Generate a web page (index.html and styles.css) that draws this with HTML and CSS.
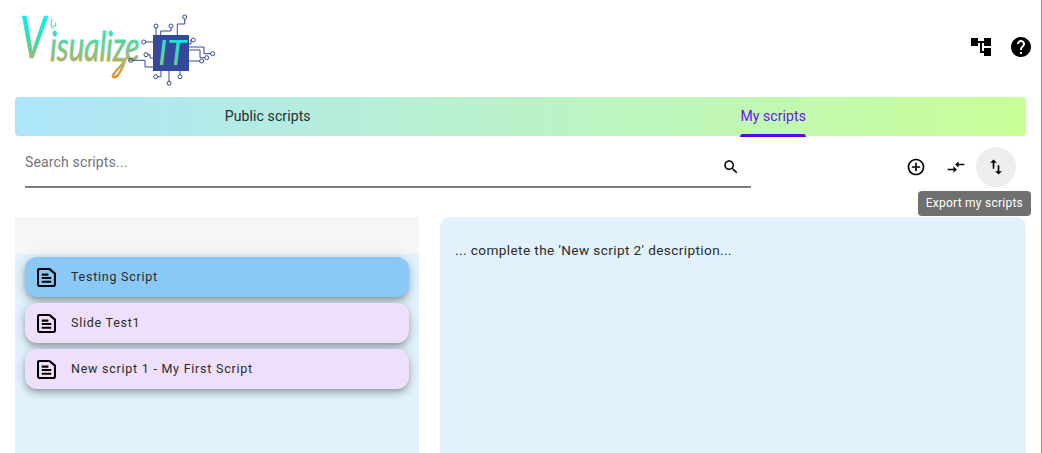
FILE: index.html
```html
<!DOCTYPE html>
<html lang="en">
<head>
<meta charset="utf-8">
<title>VisualizeIT</title>
<link rel="stylesheet" href="styles.css">
</head>
<body>
<div class="page">
  <header class="topbar">
    <svg class="logo" width="200" height="80" viewBox="15 10 200 80" xmlns="http://www.w3.org/2000/svg" role="img" aria-label="VisualizeIT">
      <defs>
        <linearGradient id="word" gradientUnits="userSpaceOnUse" x1="0" y1="14" x2="0" y2="78">
          <stop offset="0" stop-color="#00f5ee"/>
          <stop offset=".35" stop-color="#2fe0b8"/>
          <stop offset=".62" stop-color="#9cc07c"/>
          <stop offset=".8" stop-color="#b8ad5e"/>
          <stop offset="1" stop-color="#f58a1f"/>
        </linearGradient>
        <linearGradient id="wordV" gradientUnits="userSpaceOnUse" x1="0" y1="-42" x2="0" y2="2">
          <stop offset="0" stop-color="#00f5ee"/>
          <stop offset=".55" stop-color="#3fd8a8"/>
          <stop offset="1" stop-color="#a8b86c"/>
        </linearGradient>
        <linearGradient id="wordRest" gradientUnits="userSpaceOnUse" x1="0" y1="-32" x2="0" y2="2">
          <stop offset="0" stop-color="#20e8c8"/>
          <stop offset=".6" stop-color="#78c88c"/>
          <stop offset="1" stop-color="#b4ae62"/>
        </linearGradient>
        <linearGradient id="chipText" gradientUnits="userSpaceOnUse" x1="180" y1="38" x2="162" y2="68">
          <stop offset="0" stop-color="#00f0e0"/>
          <stop offset="1" stop-color="#8cc47c"/>
        </linearGradient>
      </defs>
      <text class="logo-v" transform="translate(20 58) scale(.72 1)" fill="url(#wordV)" stroke="url(#wordV)" stroke-width=".5">V</text>
      <text class="logo-word" transform="translate(50 61) scale(.74 1)" fill="url(#wordRest)" stroke="url(#wordRest)" stroke-width=".8">isualize</text>
      <path d="M126 58c-3 7-10 12-13 17-1 3 3 3 5 0 3-4 6-10 8-17" fill="none" stroke="url(#word)" stroke-width="2.4" stroke-linecap="round"/>
      <path d="M53 29c-3-3-2-7-1-10M53 26c2 1 4-1 2-3" fill="none" stroke="#40dcb0" stroke-width="1.2"/>
      <g fill="none" stroke="#34489c" stroke-width="1">
        <path d="M156 28v7M171 28v3h-10.300v4M184.700 19v5h-7.400v11M145.700 42h7.300M148 54.700h2V58h3M132.700 60.300H145V67h8"/>
        <path d="M189 44h2v-4M189 47h15v6.700h7M189 50h11v7.700h5M189 61h11M158 76.700h3V71M169 71v10M180 71v4"/>
        <circle cx="156" cy="26" r="2"/><circle cx="171" cy="26" r="2"/><circle cx="184.700" cy="17" r="2"/>
        <circle cx="143.700" cy="42" r="2"/><circle cx="146" cy="54.700" r="2"/><circle cx="130.700" cy="60.300" r="2"/>
        <circle cx="193.300" cy="40" r="2"/><circle cx="212.700" cy="53.700" r="2"/><circle cx="206.700" cy="57.700" r="2"/>
        <circle cx="201.700" cy="61" r="2"/><circle cx="155.700" cy="76.700" r="2"/><circle cx="169" cy="83.300" r="2"/>
        <circle cx="180" cy="76.700" r="2"/>
      </g>
      <rect x="153" y="35" width="36" height="36" fill="#34489c"/>
      <text class="logo-it" x="158" y="65" fill="url(#chipText)">IT</text>
    </svg>
    <div class="top-actions">
      <svg class="icon24" viewBox="0 0 24 24"><path d="M22 11V3h-7v3H9V3H2v8h7V8h2v10h4v3h7v-8h-7v3h-2V8h2v3z"/></svg>
      <svg class="icon24" viewBox="0 0 24 24"><path d="M12 2C6.480 2 2 6.480 2 12s4.480 10 10 10 10-4.480 10-10S17.520 2 12 2zm1 17h-2v-2h2v2zm2.070-7.750l-.9.920C13.450 12.900 13 13.500 13 15h-2v-.5c0-1.100.45-2.100 1.170-2.830l1.240-1.260c.37-.36.59-.86.59-1.410 0-1.100-.9-2-2-2s-2 .9-2 2H8c0-2.210 1.790-4 4-4s4 1.790 4 4c0 .88-.36 1.680-.93 2.250z"/></svg>
    </div>
  </header>

  <nav class="tabs">
    <div class="tab">Public scripts</div>
    <div class="tab tab-active"><span class="tab-label">My scripts</span></div>
  </nav>

  <section class="toolbar">
    <div class="search">
      <span class="search-text">Search scripts...</span>
      <svg class="icon18" viewBox="0 0 24 24"><path d="M15.500 14h-.79l-.28-.27C15.410 12.590 16 11.110 16 9.500 16 5.910 13.090 3 9.500 3S3 5.910 3 9.500 5.910 16 9.500 16c1.610 0 3.090-.59 4.230-1.570l.27.28v.79l5 4.990L20.490 19l-4.990-5zm-6 0C7.010 14 5 11.990 5 9.500S7.010 5 9.500 5 14 7.010 14 9.500 11.990 14 9.500 14z"/></svg>
    </div>
    <div class="tools">
      <span class="tool"><svg class="icon20" viewBox="0 0 24 24"><path d="M13 7h-2v4H7v2h4v4h2v-4h4v-2h-4V7zm-1-5C6.480 2 2 6.480 2 12s4.480 10 10 10 10-4.480 10-10S17.520 2 12 2zm0 18c-4.410 0-8-3.590-8-8s3.590-8 8-8 8 3.590 8 8-3.590 8-8 8z"/></svg></span>
      <span class="tool"><svg class="icon20" viewBox="0 0 24 24"><path d="M9.010 14H2v2h7.010v3L13 15l-3.990-4v3zm5.980-1v-3H22V8h-7.010V5L11 9l3.990 4z"/></svg></span>
      <span class="tool tool-hover"><svg class="icon20" viewBox="0 0 24 24"><path d="M9 3 5 6.990h3V14h2V6.990h3L9 3zm7 14.010V10h-2v7.010h-3L15 21l4-3.990h-3z"/></svg>
        <span class="tooltip">Export my scripts</span>
      </span>
    </div>
  </section>

  <main class="panels">
    <aside class="list-panel">
      <div class="list-head"></div>
      <div class="list-body">
        <div class="card card-selected"><svg class="doc" viewBox="0 0 20 20"><path d="M3 1h10l6 5v11a2 2 0 0 1-2 2H3a2 2 0 0 1-2-2V3a2 2 0 0 1 2-2z"/><path d="M5 7h7M5 10.500h10M5 14.500h10"/></svg><span class="card-title">Testing Script</span></div>
        <div class="card"><svg class="doc" viewBox="0 0 20 20"><path d="M3 1h10l6 5v11a2 2 0 0 1-2 2H3a2 2 0 0 1-2-2V3a2 2 0 0 1 2-2z"/><path d="M5 7h7M5 10.500h10M5 14.500h10"/></svg><span class="card-title">Slide Test1</span></div>
        <div class="card"><svg class="doc" viewBox="0 0 20 20"><path d="M3 1h10l6 5v11a2 2 0 0 1-2 2H3a2 2 0 0 1-2-2V3a2 2 0 0 1 2-2z"/><path d="M5 7h7M5 10.500h10M5 14.500h10"/></svg><span class="card-title">New script 1 - My First Script</span></div>
      </div>
    </aside>
    <article class="detail">... complete the 'New script 2' description...</article>
  </main>
</div>
</body>
</html>
```
FILE: styles.css
```css
html, body {
  margin: 0;
  height: 100%;
  overflow: hidden;
  background: #fff;
}

.page {
  box-sizing: border-box;
  width: 1042px;
  height: 453px;
  padding: 0 15px;
  border-right: 1px solid #8f8f8f;
  font-family: Roboto, "Liberation Sans", sans-serif;
  color: #212121;
  overflow: hidden;
}

.topbar {
  height: 97px;
  display: flex;
  align-items: flex-start;
  justify-content: space-between;
}

.logo {
  display: block;
  margin-top: 10px;
  overflow: visible;
}

.logo-v {
  font-family: Lato, sans-serif;
  font-style: italic;
  font-size: 58px;
}

.logo-word {
  font-family: Lato, sans-serif;
  font-style: italic;
  font-size: 40px;
}

.logo-it {
  font-family: Lato, sans-serif;
  font-style: italic;
  font-weight: 400;
  font-size: 35px;
}

.top-actions {
  display: flex;
  gap: 16px;
  margin-top: 35px;
  margin-right: -7px;
}

.icon24 {
  display: block;
  width: 24px;
  height: 24px;
  fill: #000;
}

.icon20 {
  display: block;
  width: 20px;
  height: 20px;
  fill: #000;
}

.icon18 {
  display: block;
  width: 18px;
  height: 18px;
  fill: #000;
  flex: none;
}

.tabs {
  display: flex;
  height: 39px;
  border-radius: 4px;
  background: linear-gradient(90deg, #ade5fb, #c8ff98);
}

.tab {
  flex: 1;
  display: flex;
  align-items: center;
  justify-content: center;
  padding-bottom: 2px;
  box-sizing: border-box;
  font-size: 14px;
  letter-spacing: .1px;
  color: #2a2a2a;
}

.tab-active {
  color: #6a14ee;
}

.tab-label {
  position: relative;
}

.tab-label::after {
  content: "";
  position: absolute;
  left: 0;
  right: 0;
  top: 26px;
  height: 3px;
  border-radius: 3px 3px 0 0;
  background: #6200ee;
}

.toolbar {
  display: flex;
  justify-content: space-between;
  align-items: flex-start;
  height: 81px;
  padding: 11px 10px 0;
  box-sizing: border-box;
}

.search {
  box-sizing: border-box;
  width: 726px;
  height: 41px;
  display: flex;
  align-items: center;
  justify-content: space-between;
  padding: 0 11px 0 0;
  border-bottom: 2px solid #7d7d7d;
}

.search-text {
  font-size: 14px;
  color: #757575;
  letter-spacing: .15px;
  margin-bottom: 9px;
}

.tools {
  display: flex;
}

.tool {
  position: relative;
  width: 40px;
  height: 40px;
  display: flex;
  align-items: center;
  justify-content: center;
  border-radius: 50%;
}

.tool-hover {
  background: #eeeeee;
}

.tooltip {
  position: absolute;
  top: 44px;
  right: -15px;
  box-sizing: border-box;
  height: 25px;
  line-height: 25px;
  padding: 0 8px;
  border-radius: 4px;
  background: #707070;
  color: #fff;
  font-size: 12px;
  letter-spacing: .24px;
  white-space: nowrap;
}

.panels {
  display: flex;
  gap: 21px;
  height: 300px;
}

.list-panel {
  width: 404px;
  flex: none;
  display: flex;
  flex-direction: column;
}

.list-head {
  height: 37px;
  flex: none;
  background: #f6f6f6;
}

.list-body {
  flex: 1;
  display: flex;
  flex-direction: column;
  gap: 6px;
  padding: 3px 10px;
  background: #e1f2fd;
}

.card {
  height: 40px;
  flex: none;
  display: flex;
  align-items: center;
  gap: 15px;
  padding-left: 12px;
  border-radius: 12px;
  background: #eee0fa;
  box-shadow: 0 3px 5px -1px rgba(0, 0, 0, .2), 0 5px 8px 0 rgba(0, 0, 0, .14), 0 1px 14px 0 rgba(0, 0, 0, .12);
}

.card-title {
  margin-bottom: 2px;
  font-size: 12.5px;
  letter-spacing: .75px;
  color: #2a2a2a;
}

.card-selected {
  background: #8ac9f7;
}

.doc {
  width: 19px;
  height: 19px;
  flex: none;
  fill: none;
  stroke: #000;
  stroke-width: 2.3;
}

.detail {
  flex: 1;
  padding: 24px 15px;
  border-radius: 10px 10px 0 0;
  background: #e1f2fd;
  font-size: 13.6px;
  letter-spacing: .4px;
  line-height: 18px;
  color: #2a2a2a;
}
```
